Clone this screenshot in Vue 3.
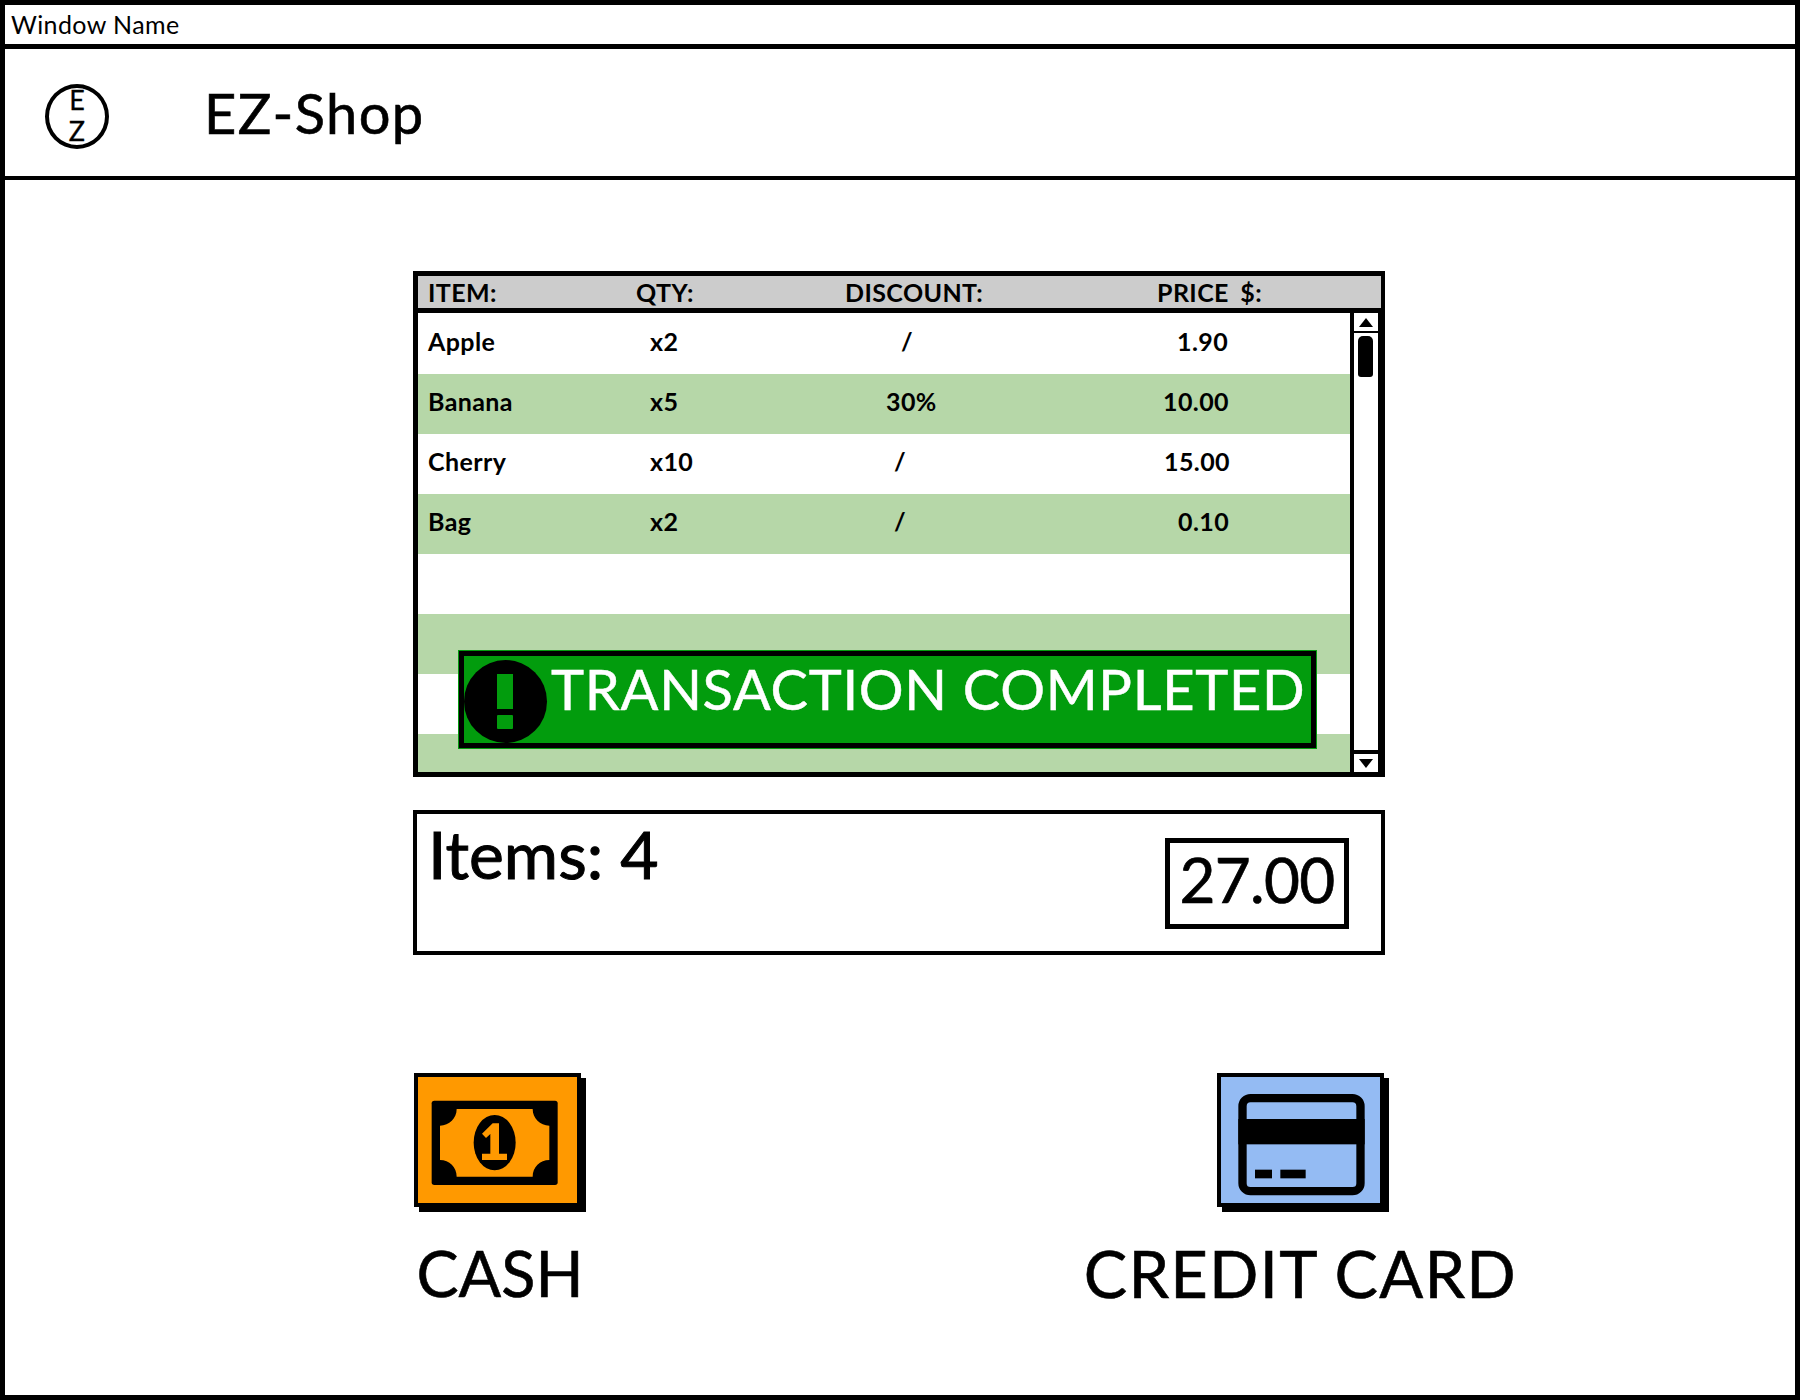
<template>
  <div class="window">
    <div class="title-bar">Window Name</div>

    <header class="app-header">
      <div class="logo"><span>E</span><span>Z</span></div>
      <h1 class="app-name">EZ-Shop</h1>
    </header>

    <main class="content">
      <section class="table">
        <div class="table-head">
          <span>ITEM:</span>
          <span>QTY:</span>
          <span>DISCOUNT:</span>
          <span>PRICE $:</span>
        </div>
        <div class="table-body">
          <div class="rows">
            <div v-for="(row, i) in rows" :key="i" class="row">
              <span>{{ row.item }}</span>
              <span>{{ row.qty }}</span>
              <span :style="{ paddingLeft: row.discountIndent + 'px' }">{{ row.discount }}</span>
              <span :style="{ paddingLeft: row.priceIndent + 'px' }">{{ row.price }}</span>
            </div>
          </div>
          <div class="scrollbar">
            <div class="scroll-btn up"><i></i></div>
            <div class="scroll-track"><div class="scroll-thumb"></div></div>
            <div class="scroll-btn down"><i></i></div>
          </div>
        </div>

        <div class="banner">
          <div class="banner-icon"><b></b><u></u></div>
          <span>TRANSACTION COMPLETED</span>
        </div>
      </section>

      <section class="summary">
        <div class="items-count">Items: 4</div>
        <div class="total">27.00</div>
      </section>

      <section class="payments">
        <div class="pay-option">
          <div class="pay-tile cash">
            <svg width="160" height="125" viewBox="0 -6 480 375">
              <rect x="41" y="65" width="378" height="253" rx="8" fill="#000" />
              <path d="M116 90H344C344 118 366 140 394 140V243C366 243 344 265 344 293H116C116 265 94 243 66 243V140C94 140 116 118 116 90Z" fill="#ff9900" />
              <ellipse cx="230" cy="191" rx="63" ry="83" fill="#000" />
              <path d="M192 164L224 133H243V224H267V243H192V224H217V165L204 177Z" fill="#ff9900" />
            </svg>
          </div>
          <div class="pay-label">CASH</div>
        </div>
        <div class="pay-option">
          <div class="pay-tile card">
            <svg width="160" height="125" viewBox="0 -6 480 375">
              <rect x="64.5" y="57.5" width="354" height="279" rx="24" fill="none" stroke="#000" stroke-width="25" />
              <rect x="52" y="120" width="379" height="76" fill="#000" />
              <rect x="102" y="272" width="51" height="26" fill="#000" />
              <rect x="178" y="272" width="76" height="26" fill="#000" />
            </svg>
          </div>
          <div class="pay-label wide">CREDIT CARD</div>
        </div>
      </section>
    </main>
  </div>
</template>

<script setup>
const rows = [
  { item: 'Apple', qty: 'x2', discount: '/', discountIndent: 56, price: '1.90', priceIndent: 20 },
  { item: 'Banana', qty: 'x5', discount: '30%', discountIndent: 41, price: '10.00', priceIndent: 6 },
  { item: 'Cherry', qty: 'x10', discount: '/', discountIndent: 49, price: '15.00', priceIndent: 7 },
  { item: 'Bag', qty: 'x2', discount: '/', discountIndent: 49, price: '0.10', priceIndent: 21 },
  { item: '', qty: '', discount: '', discountIndent: 0, price: '', priceIndent: 0 },
  { item: '', qty: '', discount: '', discountIndent: 0, price: '', priceIndent: 0 },
  { item: '', qty: '', discount: '', discountIndent: 0, price: '', priceIndent: 0 },
  { item: '', qty: '', discount: '', discountIndent: 0, price: '', priceIndent: 0 },
]
</script>

<style>
html,
body {
  margin: 0;
  background: #fff;
}
</style>

<style scoped>
.window {
  width: 1800px;
  height: 1400px;
  box-sizing: border-box;
  border: 5px solid #000;
  background: #fff;
  color: #000;
  font-family: Lato, "Noto Sans", sans-serif;
  overflow: hidden;
}

.title-bar {
  height: 39px;
  line-height: 38px;
  padding-left: 6px;
  font-size: 25px;
  letter-spacing: 0.4px;
  border-bottom: 5px solid #000;
}

.app-header {
  display: flex;
  align-items: center;
  height: 127px;
  padding-left: 40px;
  border-bottom: 4px solid #000;
}

.logo {
  width: 64px;
  height: 65px;
  margin-top: 8px;
  box-sizing: border-box;
  border: 4px solid #000;
  border-radius: 50%;
  display: flex;
  flex-direction: column;
  align-items: center;
  justify-content: space-between;
  font-size: 27px;
  line-height: 24px;
  padding-bottom: 2px;
  -webkit-text-stroke: 0.3px #000;
}

.app-name {
  margin: 0 0 0 95px;
  font-size: 56px;
  font-weight: 400;
  line-height: 58px;
  letter-spacing: 1.4px;
  -webkit-text-stroke: 0.6px #000;
}

.content {
  padding: 91px 0 0 408px;
}

.table {
  position: relative;
  width: 972px;
  box-sizing: border-box;
  border: 5px solid #000;
  border-right-width: 4px;
}

.table-head {
  display: grid;
  grid-template-columns: 208px 209px 312px auto;
  height: 32px;
  line-height: 32px;
  padding-left: 10px;
  background: #ccc;
  border-bottom: 5px solid #000;
  font-size: 25px;
  font-weight: 700;
  letter-spacing: 0.4px;
  word-spacing: 5px;
}

.table-body {
  display: flex;
  height: 459px;
}

.rows {
  flex: 1;
  overflow: hidden;
  padding-top: 1px;
}

.row {
  display: grid;
  grid-template-columns: 222px 195px 312px auto;
  height: 60px;
  line-height: 54px;
  padding-left: 10px;
  font-size: 25px;
  font-weight: 700;
  letter-spacing: 0.4px;
}

.row:nth-child(even) {
  background: #b6d7a8;
}

.scrollbar {
  width: 24px;
  border-left: 4px solid #000;
  border-right: 3px solid #000;
  display: flex;
  flex-direction: column;
}

.scroll-btn {
  height: 18px;
  display: flex;
  align-items: center;
  justify-content: center;
}

.scroll-btn.up {
  border-bottom: 2px solid #000;
}

.scroll-btn.down {
  border-top: 4px solid #000;
}

.scroll-btn i {
  width: 0;
  height: 0;
  border-left: 7px solid transparent;
  border-right: 7px solid transparent;
}

.up i {
  border-bottom: 9px solid #000;
}

.down i {
  border-top: 9px solid #000;
}

.scroll-track {
  flex: 1;
  padding: 3px 0 0 4px;
}

.scroll-thumb {
  width: 15px;
  height: 41px;
  background: #000;
  border-radius: 5px 5px 3px 3px;
}

.banner {
  position: absolute;
  left: 41px;
  top: 375px;
  width: 857px;
  height: 97px;
  box-sizing: border-box;
  display: flex;
  align-items: center;
  gap: 4px;
  background: #029c0d;
  border: 5px solid #000;
  outline: 1px solid #029c0d;
  color: #fff;
  font-size: 56px;
  letter-spacing: 0.7px;
  line-height: 1;
}

.banner span {
  margin-top: -21px;
  white-space: nowrap;
  -webkit-text-stroke: 0.5px #fff;
}

.banner-icon {
  position: relative;
  flex: none;
  width: 83px;
  height: 83px;
  margin-top: 4px;
  border-radius: 50%;
  background: #000;
}

.banner-icon b,
.banner-icon u {
  position: absolute;
  background: #029c0d;
  left: 33px;
  width: 16px;
}

.banner-icon b {
  top: 14px;
  height: 35px;
}

.banner-icon u {
  top: 55px;
  height: 14px;
  border-radius: 1px;
}

.summary {
  display: flex;
  justify-content: space-between;
  width: 972px;
  height: 145px;
  box-sizing: border-box;
  margin-top: 33px;
  padding: 4px 32px 0 11px;
  border: 4px solid #000;
}

.items-count {
  font-size: 66px;
  line-height: 72px;
  -webkit-text-stroke: 1px #000;
}

.total {
  align-self: flex-start;
  margin-top: 20px;
  width: 184px;
  height: 91px;
  box-sizing: border-box;
  border: 5px solid #000;
  text-align: center;
  font-size: 62px;
  letter-spacing: -0.7px;
  line-height: 72px;
  -webkit-text-stroke: 0.7px #000;
}

.payments {
  display: flex;
  justify-content: space-between;
  width: 1103px;
  margin-top: 118px;
  padding-left: 1px;
}

.pay-option {
  display: flex;
  flex-direction: column;
  align-items: center;
}

.pay-tile {
  width: 167px;
  height: 134px;
  margin: 0 5px 5px 0;
  box-sizing: border-box;
  border: 4px solid #000;
  box-shadow: 5px 5px 0 #000;
}

.pay-tile svg {
  display: block;
}

.cash {
  background: #ff9900;
}

.card {
  background: #94bbf3;
  margin-left: 6px;
}

.pay-label {
  margin-top: 23px;
  font-size: 63px;
  line-height: 76px;
  white-space: nowrap;
  -webkit-text-stroke: 0.6px #000;
}

.pay-label.wide {
  font-size: 65px;
  letter-spacing: 1.2px;
}
</style>
